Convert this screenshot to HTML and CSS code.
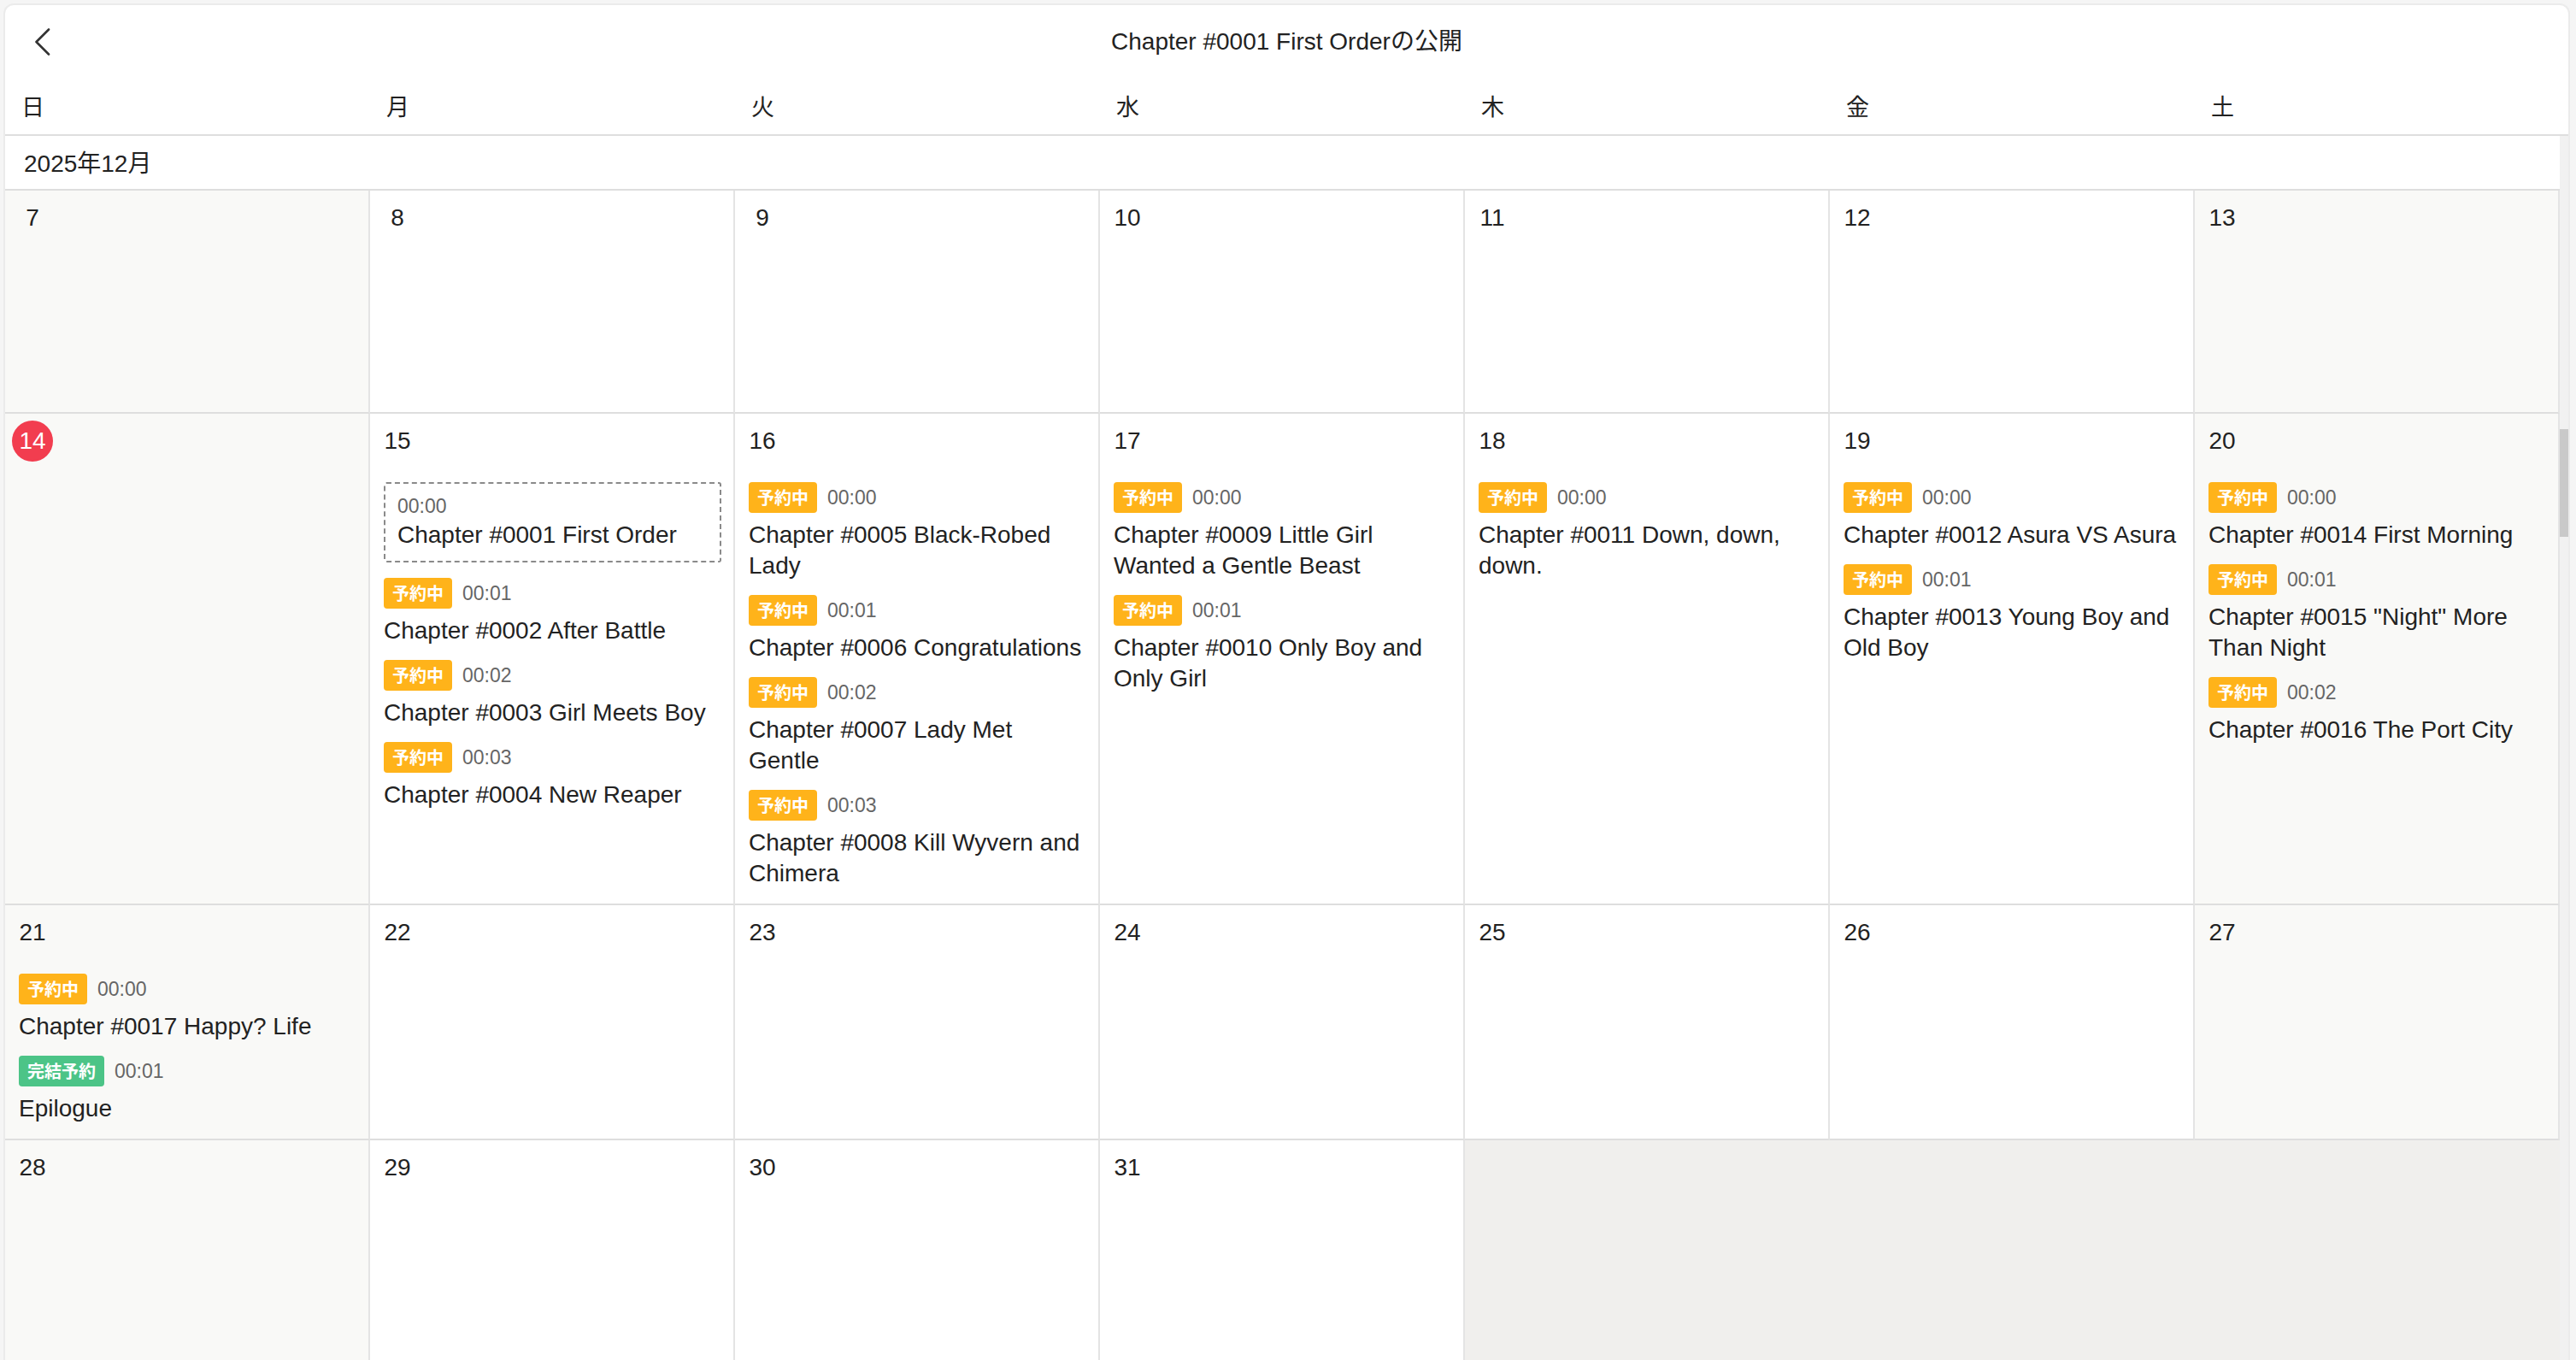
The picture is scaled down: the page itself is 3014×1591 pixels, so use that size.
FILE: index.html
```html
<!DOCTYPE html>
<html lang="ja">
<head>
<meta charset="utf-8">
<title>Chapter #0001 First Orderの公開</title>
<link rel="stylesheet" href="styles.css">
</head>
<body>
<div class="card">
  <header class="topbar">
    <button class="back" aria-label="戻る">
      <svg width="20" height="32" viewBox="0 0 20 32"><polyline points="17,1.5 2.5,16 17,30.5" fill="none" stroke="#333" stroke-width="2.6" stroke-linecap="round" stroke-linejoin="round"/></svg>
    </button>
    <h1 class="title">Chapter #0001 First Orderの公開</h1>
    <div class="spacer"></div>
  </header>

  <div class="weekdays">
    <div class="wd">日</div><div class="wd">月</div><div class="wd">火</div><div class="wd">水</div><div class="wd">木</div><div class="wd">金</div><div class="wd">土</div>
  </div>

  <div class="scroller">
    <div class="calendar">
      <div class="month">2025年12月</div>
      <div class="grid">
        <!-- week 1 -->
        <div class="cell weekend"><span class="num">7</span></div>
        <div class="cell"><span class="num">8</span></div>
        <div class="cell"><span class="num">9</span></div>
        <div class="cell"><span class="num">10</span></div>
        <div class="cell"><span class="num">11</span></div>
        <div class="cell"><span class="num">12</span></div>
        <div class="cell weekend"><span class="num">13</span></div>

        <!-- week 2 -->
        <div class="cell weekend"><span class="num today">14</span></div>
        <div class="cell"><span class="num">15</span>
          <div class="events">
            <div class="event current">
              <div class="time">00:00</div>
              <div class="name">Chapter #0001 First Order</div>
            </div>
            <div class="event"><div class="meta"><span class="badge">予約中</span><span class="time">00:01</span></div><div class="name">Chapter #0002 After Battle</div></div>
            <div class="event"><div class="meta"><span class="badge">予約中</span><span class="time">00:02</span></div><div class="name">Chapter #0003 Girl Meets Boy</div></div>
            <div class="event"><div class="meta"><span class="badge">予約中</span><span class="time">00:03</span></div><div class="name">Chapter #0004 New Reaper</div></div>
          </div>
        </div>
        <div class="cell"><span class="num">16</span>
          <div class="events">
            <div class="event"><div class="meta"><span class="badge">予約中</span><span class="time">00:00</span></div><div class="name">Chapter #0005 Black-Robed Lady</div></div>
            <div class="event"><div class="meta"><span class="badge">予約中</span><span class="time">00:01</span></div><div class="name">Chapter #0006 Congratulations</div></div>
            <div class="event"><div class="meta"><span class="badge">予約中</span><span class="time">00:02</span></div><div class="name">Chapter #0007 Lady Met Gentle</div></div>
            <div class="event"><div class="meta"><span class="badge">予約中</span><span class="time">00:03</span></div><div class="name">Chapter #0008 Kill Wyvern and Chimera</div></div>
          </div>
        </div>
        <div class="cell"><span class="num">17</span>
          <div class="events">
            <div class="event"><div class="meta"><span class="badge">予約中</span><span class="time">00:00</span></div><div class="name">Chapter #0009 Little Girl Wanted a Gentle Beast</div></div>
            <div class="event"><div class="meta"><span class="badge">予約中</span><span class="time">00:01</span></div><div class="name">Chapter #0010 Only Boy and Only Girl</div></div>
          </div>
        </div>
        <div class="cell"><span class="num">18</span>
          <div class="events">
            <div class="event"><div class="meta"><span class="badge">予約中</span><span class="time">00:00</span></div><div class="name">Chapter #0011 Down, down, down.</div></div>
          </div>
        </div>
        <div class="cell"><span class="num">19</span>
          <div class="events">
            <div class="event"><div class="meta"><span class="badge">予約中</span><span class="time">00:00</span></div><div class="name">Chapter #0012 Asura VS Asura</div></div>
            <div class="event"><div class="meta"><span class="badge">予約中</span><span class="time">00:01</span></div><div class="name">Chapter #0013 Young Boy and Old Boy</div></div>
          </div>
        </div>
        <div class="cell weekend"><span class="num">20</span>
          <div class="events">
            <div class="event"><div class="meta"><span class="badge">予約中</span><span class="time">00:00</span></div><div class="name">Chapter #0014 First Morning</div></div>
            <div class="event"><div class="meta"><span class="badge">予約中</span><span class="time">00:01</span></div><div class="name">Chapter #0015 "Night" More Than Night</div></div>
            <div class="event"><div class="meta"><span class="badge">予約中</span><span class="time">00:02</span></div><div class="name">Chapter #0016 The Port City</div></div>
          </div>
        </div>

        <!-- week 3 -->
        <div class="cell weekend"><span class="num">21</span>
          <div class="events">
            <div class="event"><div class="meta"><span class="badge">予約中</span><span class="time">00:00</span></div><div class="name">Chapter #0017 Happy? Life</div></div>
            <div class="event"><div class="meta"><span class="badge badge-green">完結予約</span><span class="time">00:01</span></div><div class="name">Epilogue</div></div>
          </div>
        </div>
        <div class="cell"><span class="num">22</span></div>
        <div class="cell"><span class="num">23</span></div>
        <div class="cell"><span class="num">24</span></div>
        <div class="cell"><span class="num">25</span></div>
        <div class="cell"><span class="num">26</span></div>
        <div class="cell weekend"><span class="num">27</span></div>

        <!-- week 4 -->
        <div class="cell weekend"><span class="num">28</span></div>
        <div class="cell"><span class="num">29</span></div>
        <div class="cell"><span class="num">30</span></div>
        <div class="cell"><span class="num">31</span></div>
        <div class="cell blank"></div>
      </div>
    </div>
    <div class="scrollbar"><div class="thumb"></div></div>
  </div>
</div>
</body>
</html>
```

FILE: styles.css
```css
* { box-sizing: border-box; }

html, body {
  margin: 0;
  height: 100%;
}

body {
  background: #f5f5f5;
  padding: 4px 7px 0 4px;
  font-family: "Liberation Sans", "Noto Sans CJK JP", sans-serif;
  color: #222;
  overflow: hidden;
}

.card {
  height: 1587px;
  background: #fff;
  border: 2px solid #ebebeb;
  border-bottom: none;
  border-radius: 12px 12px 0 0;
  display: flex;
  flex-direction: column;
  overflow: hidden;
}

/* top bar */
.topbar {
  height: 86px;
  flex: none;
  display: flex;
  align-items: center;
  padding: 0 16px 0 28px;
}

.back {
  width: 40px;
  height: 40px;
  border: none;
  background: none;
  padding: 0 0 0 6px;
  display: flex;
  align-items: center;
  justify-content: flex-start;
  cursor: pointer;
}

.title {
  flex: 1;
  margin: 0;
  text-align: center;
  font-size: 28px;
  font-weight: normal;
  line-height: 36px;
  color: #222;
  padding-right: 12px;
}

.spacer { width: 40px; }

/* weekday header */
.weekdays {
  flex: none;
  height: 67px;
  display: grid;
  grid-template-columns: repeat(7, 427px);
  padding-right: 10px;
  padding-bottom: 3px;
  border-bottom: 2px solid #dedede;
}

.wd {
  display: flex;
  align-items: center;
  padding-left: 19px;
  font-family: "Noto Sans CJK JP", "Liberation Sans", sans-serif;
  font-size: 27px;
  color: #222;
}

/* scroll area */
.scroller {
  flex: 1;
  min-height: 0;
  display: flex;
  overflow: hidden;
}

.calendar {
  width: 2989px;
  flex: none;
}

.scrollbar {
  width: 10px;
  flex: none;
  background: #f1f1f1;
}

.thumb {
  margin-top: 343px;
  height: 126px;
  background: #c9c9c9;
}

.month {
  height: 64px;
  display: flex;
  align-items: center;
  padding-left: 22px;
  padding-bottom: 2px;
  font-size: 28px;
  border-bottom: 2px solid #dedede;
}

.grid {
  display: grid;
  grid-template-columns: repeat(7, 427px);
}

.cell {
  min-height: 261px;
  padding: 8px 8px 0 8px;
  border-right: 2px solid #e4e4e4;
  border-bottom: 2px solid #dedede;
  background: #fff;
}

.cell.weekend { background: #f9f9f7; }

.cell.blank {
  grid-column: span 3;
  background: #f0efed;
  border-right: none;
}

.num {
  display: inline-block;
  min-width: 48px;
  height: 48px;
  line-height: 48px;
  padding: 0 8px;
  text-align: center;
  font-size: 28px;
  color: #222;
}

.num.today {
  width: 48px;
  padding: 0;
  border-radius: 50%;
  background: #f23d4f;
  color: #fff;
}

/* events */
.events {
  margin-top: 24px;
  padding: 0 6px 17px 8px;
  display: flex;
  flex-direction: column;
  gap: 16px;
}

.event.current {
  border: 2px dashed #8a8a8a;
  border-radius: 3px;
  padding: 10px 14px 12px;
  margin-bottom: 2px;
}

.event.current .time {
  display: block;
  line-height: 32px;
}

.meta {
  height: 36px;
  display: flex;
  align-items: center;
  gap: 12px;
}

.badge {
  height: 36px;
  line-height: 36px;
  padding: 0 10px;
  border-radius: 4px;
  background: #ffb31a;
  color: #fff;
  font-family: "Noto Sans CJK JP", sans-serif;
  font-weight: bold;
  font-size: 20px;
}

.badge-green { background: #4cc487; }

.time {
  font-size: 23px;
  color: #666;
}

.name {
  margin-top: 8px;
  font-size: 28px;
  line-height: 36px;
  color: #222;
}

.event.current .name { margin-top: 0; }
```
